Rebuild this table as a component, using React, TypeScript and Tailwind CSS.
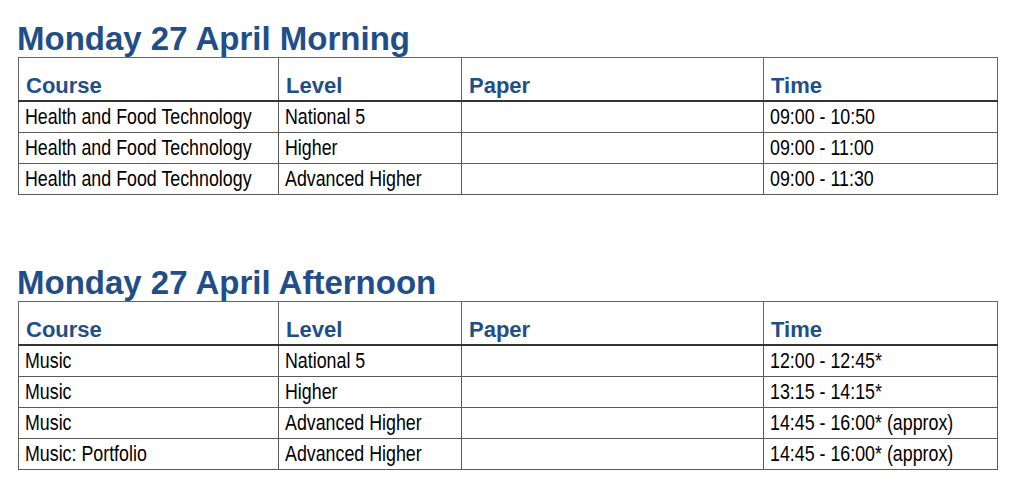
import React from "react";

type Row = [string, string, string, string];

const morning: Row[] = [
  ["Health and Food Technology", "National 5", "", "09:00 - 10:50"],
  ["Health and Food Technology", "Higher", "", "09:00 - 11:00"],
  ["Health and Food Technology", "Advanced Higher", "", "09:00 - 11:30"],
];

const afternoon: Row[] = [
  ["Music", "National 5", "", "12:00 - 12:45*"],
  ["Music", "Higher", "", "13:15 - 14:15*"],
  ["Music", "Advanced Higher", "", "14:45 - 16:00* (approx)"],
  ["Music: Portfolio", "Advanced Higher", "", "14:45 - 16:00* (approx)"],
];

const sans = '"Liberation Sans", Arial, sans-serif';

function Section({ title, rows, className }: { title: string; rows: Row[]; className?: string }) {
  return (
    <section className={className}>
      <h2
        className="text-[33px] leading-[33px] font-bold text-[#1f4e89] mb-[2px] ml-[17px]"
        style={{ fontFamily: sans }}
      >
        {title}
      </h2>
      <table className="border-collapse border border-[#666] w-[979px] ml-[18px] table-fixed">
        <colgroup>
          <col className="w-[260px]" />
          <col className="w-[183px]" />
          <col className="w-[302px]" />
          <col className="w-[234px]" />
        </colgroup>
        <thead>
          <tr>
            {["Course", "Level", "Paper", "Time"].map((h) => (
              <th
                key={h}
                className="border-l border-r border-[#666] border-b-2 border-b-[#333] text-left align-bottom pl-[7px] pt-[17px] pb-[3px] text-[22px] leading-[22px] font-bold text-[#1f4e89]"
                style={{ fontFamily: sans }}
              >
                {h}
              </th>
            ))}
          </tr>
        </thead>
        <tbody>
          {rows.map((r, i) => (
            <tr key={i}>
              {r.map((c, j) => (
                <td
                  key={j}
                  className="border border-[#5a5a5a] pl-[6px] pt-[4px] pb-[4px] text-[22px] leading-[22px] text-black whitespace-nowrap overflow-visible"
                  style={{ fontFamily: sans }}
                >
                  <span className="inline-block origin-left scale-x-[0.81]">{c || "\u00a0"}</span>
                </td>
              ))}
            </tr>
          ))}
        </tbody>
      </table>
    </section>
  );
}

export default function App() {
  return (
    <div className="w-[1024px] h-[488px] bg-white overflow-hidden pt-[22px]">
      <Section title="Monday 27 April Morning" rows={morning} />
      <Section title="Monday 27 April Afternoon" rows={afternoon} className="mt-[71px]" />
    </div>
  );
}
